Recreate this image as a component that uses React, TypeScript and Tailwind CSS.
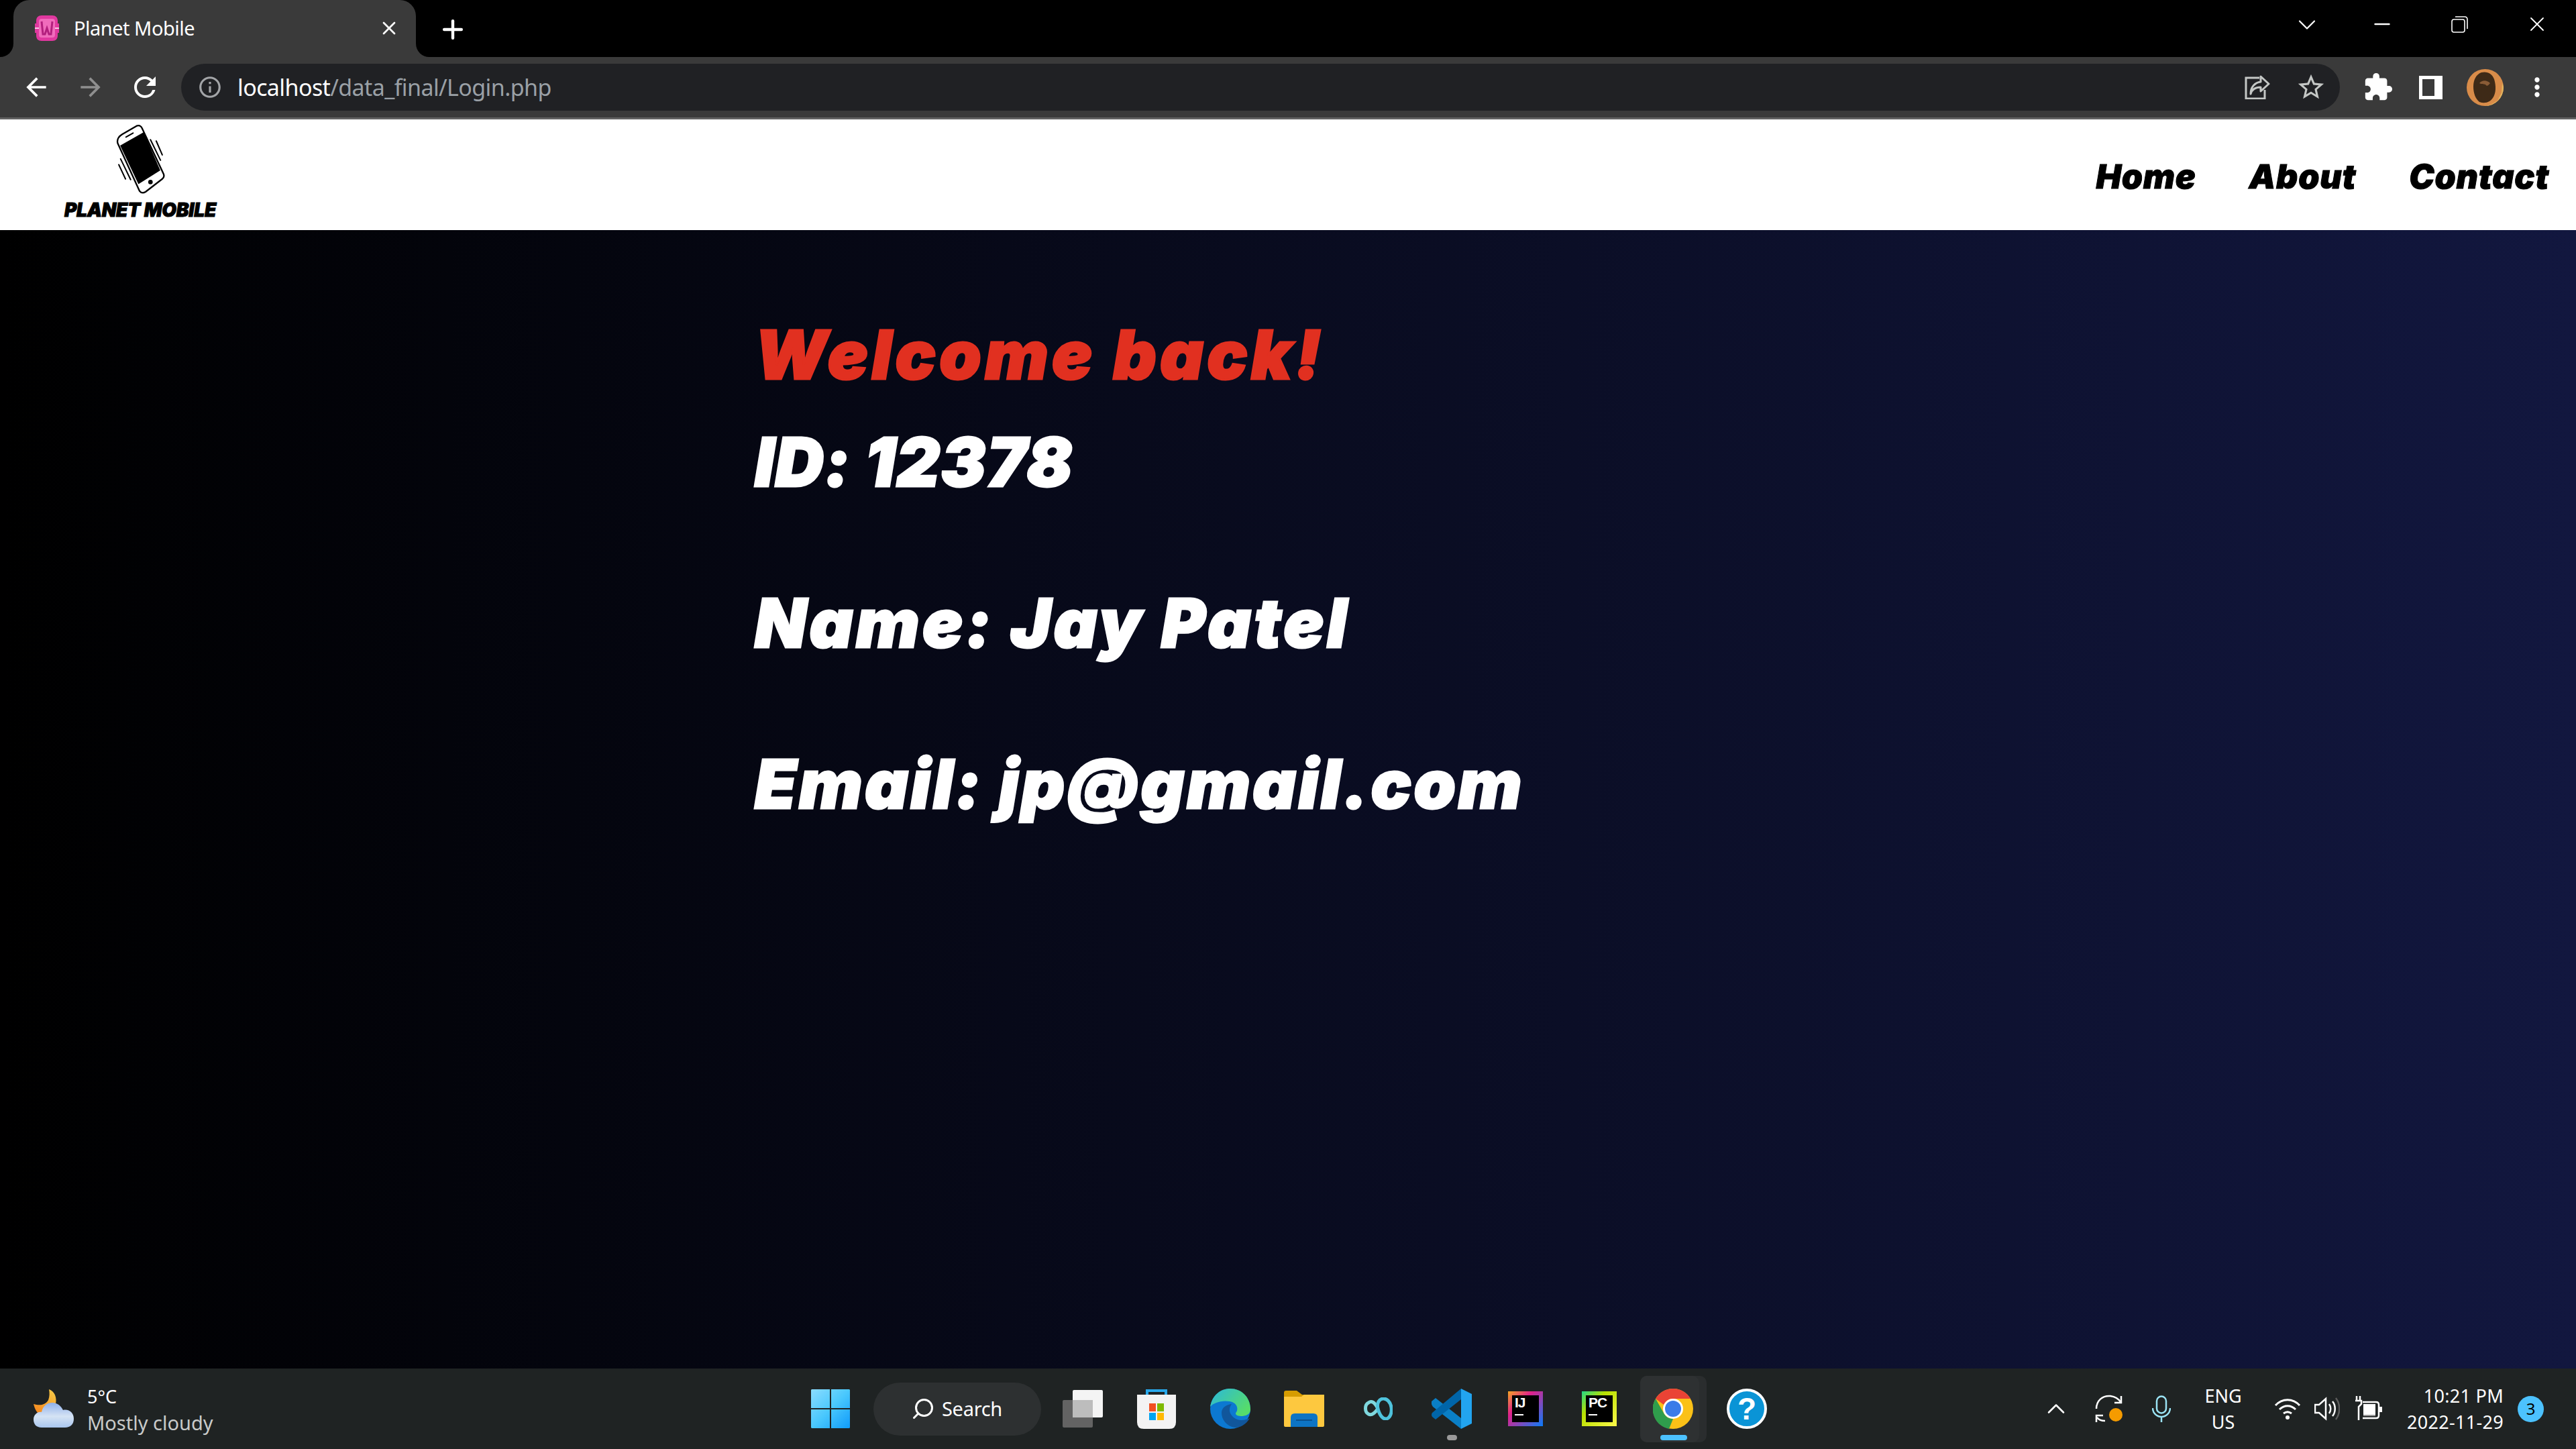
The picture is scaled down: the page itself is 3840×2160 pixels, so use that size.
import { MdArrowBack, MdArrowForward, MdExtension, MdInfoOutline, MdMoreVert, MdRefresh, MdStarBorder } from "react-icons/md";
import { LuChevronDown, LuChevronUp, LuMinus, LuPlus, LuSearch, LuX } from "react-icons/lu";

const uiFont = "font-['Noto_Sans',sans-serif]";
const heavyFont = "font-['Inter',sans-serif] font-black italic";

function Favicon() {
  return (
    <svg viewBox="0 0 36 38" className="w-[36px] h-[38px]">
      <path d="M10 0h16c5 0 8 3 8 8v4h2v14h-2v4c0 5-3 8-8 8H10c-5 0-8-3-8-8v-4H0V12h2V8c0-5 3-8 8-8z" fill="#e0389f" />
      <rect x="6" y="5" width="24" height="28" rx="4" fill="#f06cbc" />
      <path d="M10 9l2 19h3l3-9 3 9h3l2-19" fill="none" stroke="#b3207e" strokeWidth="3" />
      <path d="M0 19h6M30 19h6" stroke="#f8c6e4" strokeWidth="2" />
    </svg>
  );
}

function ShareIcon() {
  return (
    <svg viewBox="0 0 38 36" className="w-[38px] h-[36px]" fill="none" stroke="#c4c7c5" strokeWidth="3">
      <path d="M22 4H2v31h28V22" />
      <path d="M24 2l12 11-12 11v-6c-8 0-13 3-15 10 0-10 6-17 15-18z" strokeLinejoin="round" fill="#202124" />
    </svg>
  );
}

function Avatar() {
  return (
    <svg viewBox="0 0 55 55" className="w-[55px] h-[55px]">
      <circle cx="27.5" cy="27.5" r="27.5" fill="#d98c49" />
      <path d="M27.5 55a27.5 27.5 0 0 0 27.5-27c0-3-1-5-2-7l-1 14-6 12-10 6z" fill="#e2b45e" />
      <path d="M22 5c9-2 16 2 19 10 3 10 3 21-2 28-4 6-11 9-20 6-6-5-9-13-9-23C10 16 14 8 22 5z" fill="#3e2a17" />
      <path d="M19 21c4-5 11-5 16 0-3 4-5 5-7 2-3-1-6 0-9-2z" fill="#8a5c36" />
    </svg>
  );
}

function PhoneLogo() {
  return (
    <svg viewBox="335 40 225 325" className="w-[75px] h-[108px]" fill="none" stroke="#000" strokeLinecap="round" strokeLinejoin="round">
      <path d="M365 92L430 54q16-6 24 10L551 270q5 14-6 22L470 350q-16 10-27-4L345 132q-6-24 20-40z" strokeWidth="7" fill="#fff" />
      <path d="M356 142L462 82 536 254 438 315z" fill="#000" stroke="none" />
      <path d="M382 104L414 86" strokeWidth="6" />
      <circle cx="492" cy="306" r="10" fill="#000" stroke="none" />
      <path d="M492 116L537 208M518 122L545 184M358 202L403 295M350 228L380 292" strokeWidth="6" />
    </svg>
  );
}

function Weather() {
  return (
    <svg viewBox="0 0 60 58" className="w-[60px] h-[58px]">
      <defs>
        <linearGradient id="moon" x1="0.7" y1="0" x2="0.1" y2="1">
          <stop offset="0" stopColor="#f6c544" />
          <stop offset="1" stopColor="#f6841b" />
        </linearGradient>
        <linearGradient id="cloud" x1="0" y1="0" x2="0" y2="1">
          <stop offset="0" stopColor="#8fb0ea" />
          <stop offset="0.55" stopColor="#d5e3f4" />
          <stop offset="1" stopColor="#a9c6ee" />
        </linearGradient>
      </defs>
      <path d="M23 0c9 3 12 13 10 22-3 9-14 15-24 15C5 35 2 30 0 22c10 3 18 1 22-6 2-5 2-11 1-16z" fill="url(#moon)" />
      <path d="M12 57C4 57 0 52 0 45c0-7 6-12 12-11 2-10 9-14 16-14 8 0 13 5 16 11 9-2 16 4 16 13 0 8-5 13-13 13z" fill="url(#cloud)" />
    </svg>
  );
}

function WindowsLogo() {
  return (
    <svg viewBox="0 0 58 58" className="w-[58px] h-[58px]">
      <defs>
        <linearGradient id="win" x1="0" y1="0" x2="1" y2="1">
          <stop offset="0" stopColor="#8bdcff" />
          <stop offset="0.5" stopColor="#4ac8fd" />
          <stop offset="1" stopColor="#0f9bfa" />
        </linearGradient>
      </defs>
      <path d="M1 0h27v28H0V1zM30 0h27l1 1v27H30zM0 30h28v28H1l-1-1zM30 30h28v27l-1 1H30z" fill="url(#win)" />
    </svg>
  );
}

function TaskView() {
  return (
    <svg viewBox="0 0 60 56" className="w-[60px] h-[56px]">
      <rect x="15" y="0" width="45" height="41" rx="2" fill="#f4f4f4" />
      <rect x="0" y="15" width="45" height="41" rx="2" fill="#6a6a6a" fillOpacity="0.9" />
      <rect x="15" y="15" width="30" height="26" fill="#bdbdbd" />
    </svg>
  );
}

function StoreIcon() {
  return (
    <svg viewBox="0 0 58 60" className="w-[58px] h-[60px]">
      <path d="M15 16V3h28v13" fill="none" stroke="#29a8ea" strokeWidth="4" />
      <path d="M0 9h58v41q0 10-10 10H10Q0 60 0 50z" fill="#f3f3f3" />
      <rect x="18" y="22" width="10" height="12" fill="#f25022" />
      <rect x="30" y="22" width="10" height="12" fill="#7fba00" />
      <rect x="18" y="36" width="10" height="11" fill="#00a4ef" />
      <rect x="30" y="36" width="10" height="11" fill="#ffb900" />
    </svg>
  );
}

function EdgeIcon() {
  return (
    <svg viewBox="0 0 60 60" className="w-[60px] h-[60px]">
      <defs>
        <linearGradient id="edge1" x1="0" y1="0" x2="1" y2="0.6">
          <stop offset="0" stopColor="#2bb8dc" />
          <stop offset="1" stopColor="#56dc6a" />
        </linearGradient>
      </defs>
      <circle cx="30" cy="30" r="30" fill="#0c78d1" />
      <path d="M0 27C3 10 15 0 30 0c16 0 30 12 30 31 0 8-8 10-14 10-6 0-10-3-7-6 3-4 2-14-10-16C17 17 5 21 0 27z" fill="url(#edge1)" />
      <path d="M17 36c0 10 7 20 20 22 8 0 16-4 22-14-6 3-17 5-24-1-7-6-8-13-3-20-9 1-15 6-15 13z" fill="#11569b" />
    </svg>
  );
}

function FolderIcon() {
  return (
    <svg viewBox="0 0 60 54" className="w-[60px] h-[54px]">
      <path d="M0 3q0-3 3-3h16l8 6h33v10H0z" fill="#d69c00" />
      <path d="M0 9h26l4-3h30v46q0 2-2 2H2q-2 0-2-2z" fill="#fdc83f" />
      <path d="M10 54V40q0-6 6-6h28q6 0 6 6v14z" fill="#0d74c4" />
      <path d="M18 44h24" stroke="#0a4f8c" strokeWidth="2" />
    </svg>
  );
}

function LoopIcon() {
  return (
    <svg viewBox="0 0 44 34" className="w-[44px] h-[34px]" fill="none" strokeWidth="5">
      <path d="M22 17C17 6 12 5 8 8 2 11 2 22 8 25c4 2 9-1 14-8" stroke="#7fd8de" />
      <path d="M22 17c3 11 8 16 13 15 6-2 8-10 7-17-1-8-7-14-13-13-5 1-9 6-7 15" stroke="#4fc3dc" />
    </svg>
  );
}

function VsCodeIcon() {
  return (
    <svg viewBox="0 0 60 60" className="w-[60px] h-[60px]">
      <path d="M0 19l6-5 38 30v16L2 27q-3-4-2-8z" fill="#0a7fc6" />
      <path d="M44 0v16L6 46l-5-4q-2-3 0-6z" fill="#0065a9" />
      <path d="M44 0l16 8v44l-16 8z" fill="#22a4ef" />
    </svg>
  );
}

function JetBrainsIcon({ label, from, via, to }: { label: string; from: string; via: string; to: string }) {
  return (
    <div className="w-[52px] h-[52px] p-[6px]" style={{ background: `linear-gradient(135deg, ${from}, ${via} 35%, ${to})` }}>
      <div className="w-full h-full bg-black flex flex-col px-[4px] overflow-hidden">
        <span className="text-white text-[21px] leading-[22px] font-bold font-['Liberation_Sans',sans-serif] tracking-[-1px]">{label}</span>
        <span className="w-[13px] h-[2px] bg-white mt-[6px]" />
      </div>
    </div>
  );
}

function ChromeIcon() {
  return (
    <svg viewBox="0 0 60 60" className="relative w-[60px] h-[60px]">
      <circle cx="30" cy="30" r="30" fill="#fbc117" />
      <path d="M30 0a30 30 0 0 1 26 15H30a15 15 0 0 0-14 9L4 15A30 30 0 0 1 30 0z" fill="#ea4335" />
      <path d="M4 15l13 23a15 15 0 0 0 13 7l-6 15A30 30 0 0 1 4 15z" fill="#2f9d4c" />
      <circle cx="30" cy="30" r="15" fill="#fff" />
      <circle cx="30" cy="30" r="12" fill="#3b7be8" />
    </svg>
  );
}

function SyncIcon() {
  return (
    <svg viewBox="0 0 44 44" className="w-[44px] h-[44px]" fill="none" stroke="#fff" strokeWidth="2.5">
      <path d="M3 22C3 10 12 2 24 3c7 1 12 4 15 9" />
      <path d="M40 3v10H30" />
      <path d="M16 40c-4 0-9-1-12-5M3 42V32h10" />
      <circle cx="32" cy="31" r="10" fill="#f59b00" stroke="none" />
    </svg>
  );
}

function MicIcon() {
  return (
    <svg viewBox="0 0 28 40" className="w-[28px] h-[40px]" fill="none" stroke="#9be4f5" strokeWidth="2.5">
      <rect x="7" y="1.5" width="14" height="25" rx="7" />
      <path d="M1 19a13 13 0 0 0 26 0M14 32v8" />
    </svg>
  );
}

function WifiIcon() {
  return (
    <svg viewBox="0 0 40 34" className="w-[40px] h-[34px]" fill="none" stroke="#fff" strokeWidth="3">
      <path d="M2 12c10-11 26-11 36 0M8 18c7-7 17-7 24 0M14 24c4-3 8-3 12 0" />
      <circle cx="20" cy="30" r="3" fill="#fff" stroke="none" />
    </svg>
  );
}

function SpeakerIcon() {
  return (
    <svg viewBox="0 0 38 36" className="w-[38px] h-[36px]" fill="none" stroke="#fff" strokeWidth="2.5">
      <path d="M1 12h6l10-9v30L7 24H1z" />
      <path d="M22 11c3 4 3 10 0 14M27 7c5 6 5 16 0 22" />
      <path d="M32 2c7 9 7 23 0 32" stroke="#5c5c5c" />
    </svg>
  );
}

function BatteryIcon() {
  return (
    <svg viewBox="0 0 42 38" className="w-[42px] h-[38px]" fill="none" stroke="#fff" strokeWidth="2.5">
      <path d="M12 9h20q4 0 4 4v16q0 4-4 4H12" />
      <rect x="36" y="16" width="5" height="8" fill="#fff" stroke="none" />
      <rect x="13" y="12" width="18" height="16" fill="#fff" stroke="none" />
      <path d="M3 0v7M8 0v7M1 7h9v5l-4 4v20" />
      <rect x="13" y="28" width="18" height="2" fill="#9a9a9a" stroke="none" />
    </svg>
  );
}

function TaskSlot({ children }: { children: React.ReactNode }) {
  return <div className="w-[110px] h-[120px] flex items-center justify-center shrink-0">{children}</div>;
}

export default function App() {
  return (
    <div className={`w-[3840px] h-[2160px] flex flex-col overflow-hidden bg-black ${uiFont}`}>
      {/* tab strip */}
      <div className="h-[85px] bg-black flex shrink-0 pl-[20px]">
        <div className="relative w-[600px] h-[85px] bg-[#3a3a3a] rounded-t-[24px] flex items-center pl-[32px] pb-[2px]">
          <div className="absolute -left-[20px] bottom-0 w-[20px] h-[20px] bg-[#3a3a3a]">
            <div className="w-full h-full bg-black rounded-br-[20px]" />
          </div>
          <div className="absolute -right-[20px] bottom-0 w-[20px] h-[20px] bg-[#3a3a3a]">
            <div className="w-full h-full bg-black rounded-bl-[20px]" />
          </div>
          <Favicon />
          <span className="ml-[22px] text-[29px] text-white tracking-[-0.5px]">Planet Mobile</span>
          <LuX className="ml-auto mr-[24px] text-white w-[32px] h-[32px]" />
        </div>
        <LuPlus className="ml-[33px] mt-[22px] text-white w-[44px] h-[44px]" strokeWidth={2.4} />
        <div className="ml-auto flex items-start text-white">
          <LuChevronDown className="w-[44px] h-[44px] mt-[15px]" strokeWidth={1.2} />
          <LuMinus className="ml-[72px] w-[36px] h-[36px] mt-[18px]" strokeWidth={1.6} />
          <svg viewBox="0 0 25 25" className="ml-[85px] mt-[24px] w-[25px] h-[25px]" fill="none" stroke="#fff" strokeWidth="1.6">
            <rect x="1" y="5" width="19" height="19" rx="3" />
            <path d="M6 1h14q4 0 4 4v14" />
          </svg>
          <LuX className="ml-[85px] mr-[40px] w-[36px] h-[36px] mt-[18px]" strokeWidth={1.2} />
        </div>
      </div>

      {/* toolbar */}
      <div className="h-[93px] bg-[#3a3a3a] border-b-[3px] border-[#626262] flex items-center shrink-0 pl-[32px] pr-[24px]">
        <MdArrowBack className="w-[44px] h-[44px] text-white" />
        <MdArrowForward className="ml-[37px] w-[44px] h-[44px] text-[#8f8f8f]" />
        <MdRefresh className="ml-[35px] w-[48px] h-[48px] text-white" />
        <div className="ml-[30px] w-[3218px] h-[70px] rounded-full bg-[#202124] flex items-center pl-[24px] pr-[20px]">
          <MdInfoOutline className="w-[38px] h-[38px] text-[#a3a5a8]" />
          <span className="ml-[22px] text-[34px] text-white tracking-[-0.6px]">
            localhost<span className="text-[#9aa0a6]">/data_final/Login.php</span>
          </span>
          <div className="ml-auto flex items-center gap-[38px]">
            <ShareIcon />
            <MdStarBorder className="w-[46px] h-[46px] text-[#c4c7c5]" />
          </div>
        </div>
        <MdExtension className="ml-[34px] w-[46px] h-[46px] text-white" />
        <div className="ml-[38px] w-[35px] h-[35px] border-[5px] border-r-[12px] border-white bg-[#3a3a3a]" />
        <div className="ml-[36px]"><Avatar /></div>
        <MdMoreVert className="ml-[28px] w-[44px] h-[44px] text-white" />
      </div>

      {/* site header */}
      <header className="h-[165px] bg-white flex justify-between shrink-0 pl-[95px] pr-[40px]">
        <div className="flex flex-col items-center w-[228px] pt-[5px]">
          <PhoneLogo />
          <span className={`${heavyFont} mt-[6px] text-[28px] leading-[32px] text-black whitespace-nowrap tracking-[-0.2px] [-webkit-text-stroke:1px_currentColor]`}>PLANET MOBILE</span>
        </div>
        <nav className={`${heavyFont} flex items-center gap-[79px] text-[50px] tracking-[0.8px] text-black pt-[6px] [-webkit-text-stroke:1px_currentColor]`}>
          <span>Home</span>
          <span>About</span>
          <span>Contact</span>
        </nav>
      </header>

      {/* main */}
      <main className="flex-1 bg-[linear-gradient(to_right,#000,#12173f)] pl-[1125px] pt-[126px] text-white">
        <h1 className={`${heavyFont} text-[100px] leading-[120px] tracking-[5.5px] text-[#e13020] [-webkit-text-stroke:3px_currentColor]`}>Welcome back!</h1>
        <div className={`${heavyFont} mt-[40px] text-[100px] leading-[120px] flex flex-col gap-[120px] [-webkit-text-stroke:3px_currentColor]`}>
          <p className="tracking-[1.5px]">ID: 12378</p>
          <p className="tracking-[4.7px]">Name: Jay Patel</p>
          <p className="tracking-[3.8px]">Email: jp@gmail.com</p>
        </div>
      </main>

      {/* taskbar */}
      <footer className="h-[120px] bg-[#1f2323] flex items-center shrink-0 relative">
        <div className="w-[1183px] pl-[50px] flex items-center gap-[20px]">
          <Weather />
          <div className="flex flex-col pt-[2px]">
            <span className="text-[27px] leading-[39px] text-white">5°C</span>
            <span className="text-[29px] leading-[39px] text-[#c8cac9]">Mostly cloudy</span>
          </div>
        </div>
        <div className="flex items-center">
          <TaskSlot><WindowsLogo /></TaskSlot>
          <div className="ml-[9px] mr-[7px] w-[250px] h-[79px] rounded-full bg-[#2d3031] flex items-center pl-[56px] text-white">
            <LuSearch className="w-[36px] h-[36px] -scale-x-100" strokeWidth={2} />
            <span className="ml-[10px] text-[29px] tracking-[-0.3px]">Search</span>
          </div>
          <TaskSlot><TaskView /></TaskSlot>
          <TaskSlot><StoreIcon /></TaskSlot>
          <TaskSlot><EdgeIcon /></TaskSlot>
          <TaskSlot><FolderIcon /></TaskSlot>
          <TaskSlot><LoopIcon /></TaskSlot>
          <TaskSlot>
            <div className="relative">
              <VsCodeIcon />
              <span className="absolute left-[23px] top-[69px] w-[15px] h-[8px] rounded-full bg-[#9a9a9a]" />
            </div>
          </TaskSlot>
          <TaskSlot><JetBrainsIcon label="IJ" from="#f5a623" via="#e0218a" to="#087cfa" /></TaskSlot>
          <TaskSlot><JetBrainsIcon label="PC" from="#21d789" via="#b8e000" to="#fcf84a" /></TaskSlot>
          <TaskSlot>
            <div className="relative w-[99px] h-[99px] rounded-[10px] bg-[#2a2d2e] flex items-center justify-center">
              <div className="absolute left-0 top-0 w-[88px] h-[99px] rounded-[10px] bg-[#2e3132]" />
              <ChromeIcon />
              <span className="absolute left-[30px] top-[88px] w-[40px] h-[8px] rounded-full bg-[#4cc2ff]" />
            </div>
          </TaskSlot>
          <TaskSlot>
            <div className="w-[60px] h-[60px] rounded-full bg-[#0a94d6] border-[4px] border-white flex items-center justify-center text-white text-[46px] font-bold font-['Liberation_Sans',sans-serif]">?</div>
          </TaskSlot>
        </div>
        <div className="ml-auto pr-[48px] flex items-center text-white">
          <LuChevronUp className="w-[44px] h-[44px]" strokeWidth={1.4} />
          <div className="ml-[35px]"><SyncIcon /></div>
          <div className="ml-[42px]"><MicIcon /></div>
          <div className="ml-[46px] w-[64px] flex flex-col items-center text-[27px] leading-[39px]">
            <span>ENG</span>
            <span>US</span>
          </div>
          <div className="ml-[44px]"><WifiIcon /></div>
          <div className="ml-[20px]"><SpeakerIcon /></div>
          <div className="ml-[22px]"><BatteryIcon /></div>
          <div className="ml-[28px] w-[152px] flex flex-col items-end text-[27px] leading-[39px] tracking-[0.3px]">
            <span>10:21 PM</span>
            <span>2022-11-29</span>
          </div>
          <div className="ml-[21px] w-[39px] h-[39px] rounded-full bg-[#4cc2ff] flex items-center justify-center text-black text-[24px]">3</div>
        </div>
      </footer>
    </div>
  );
}
